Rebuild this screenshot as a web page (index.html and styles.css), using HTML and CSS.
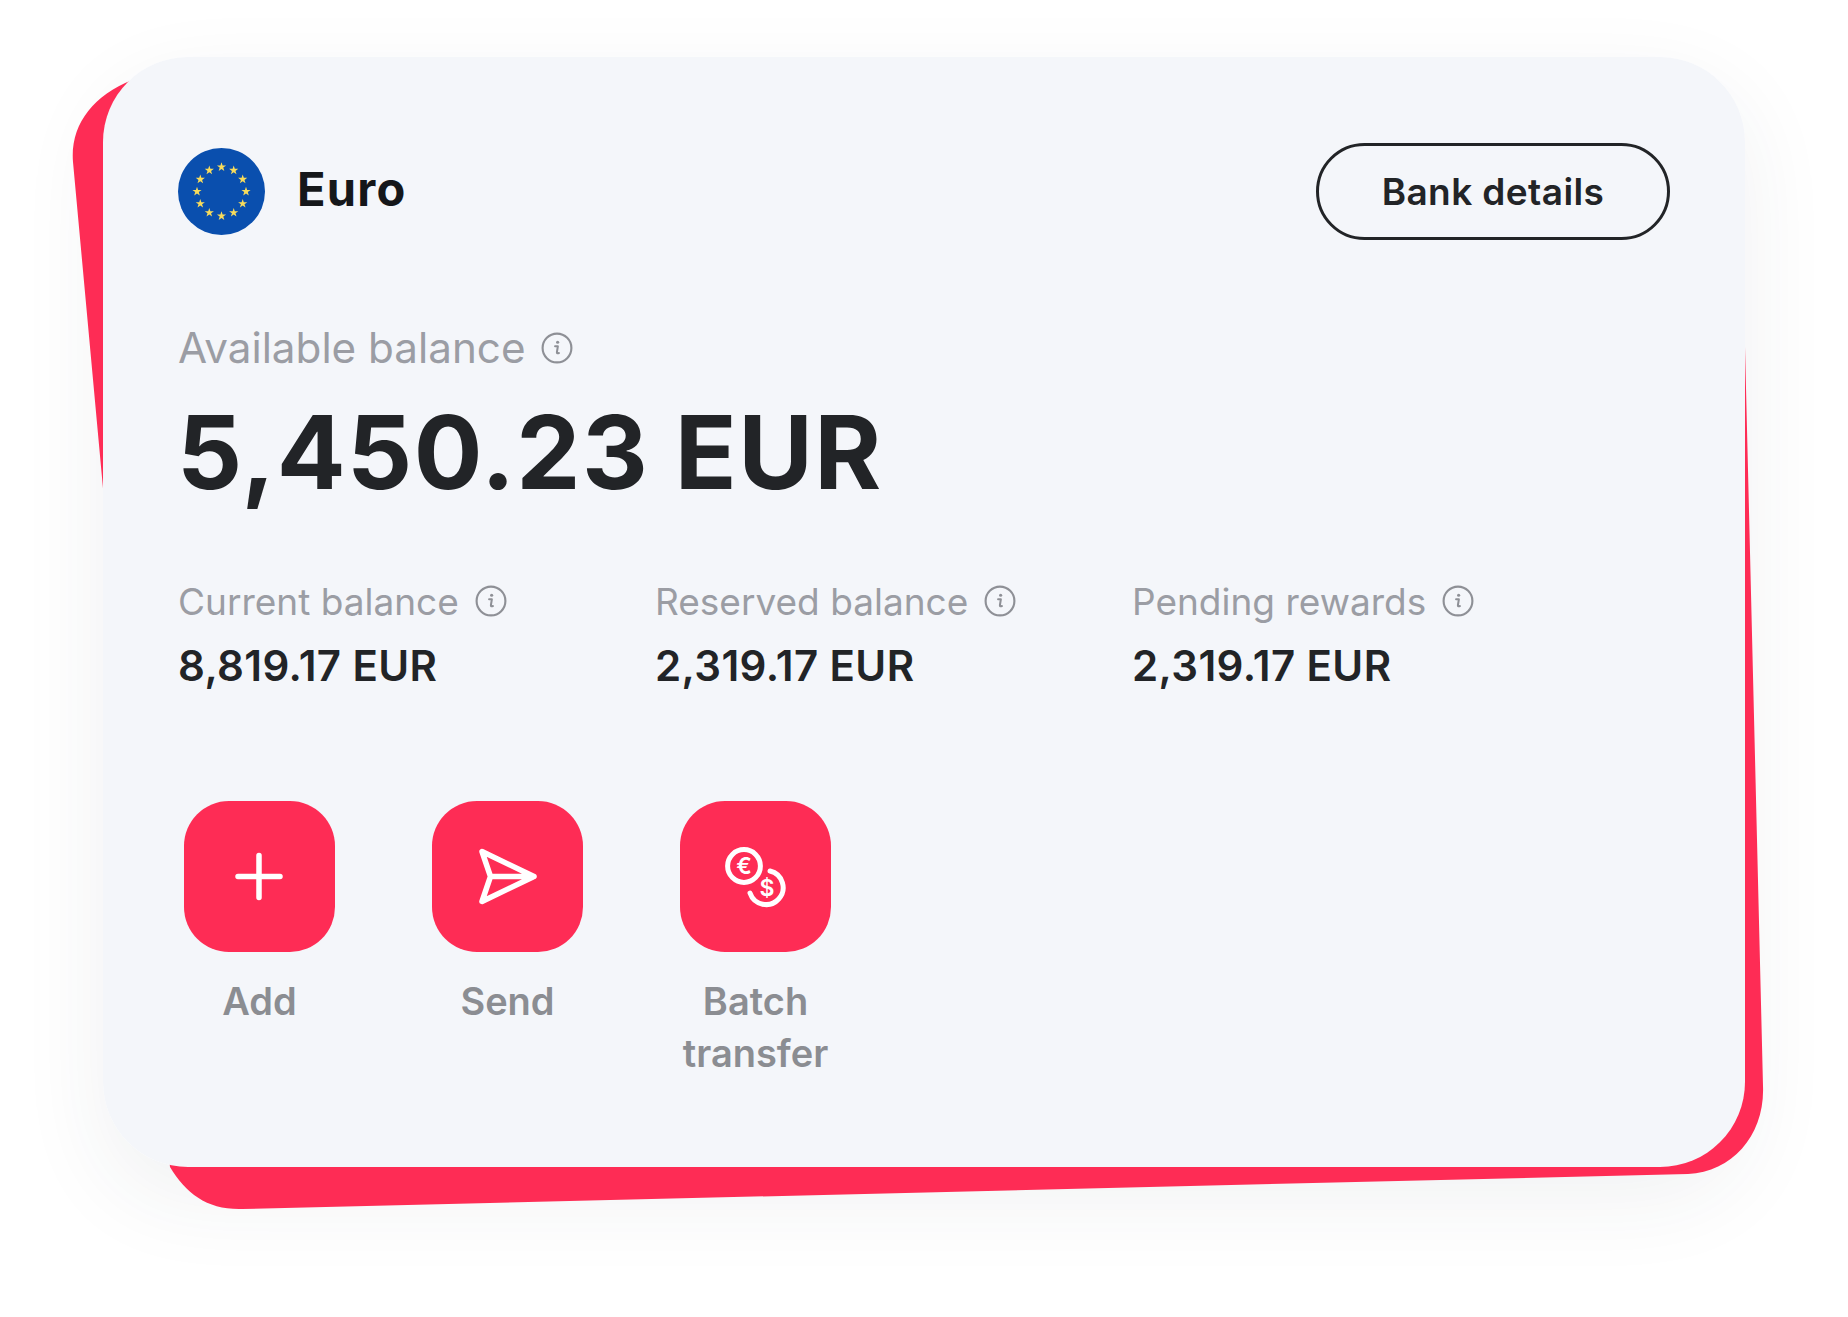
FILE: index.html
```html
<!DOCTYPE html>
<html lang="en">
<head>
<meta charset="utf-8">
<title>Euro balance</title>
<link rel="stylesheet" href="styles.css">
</head>
<body>
<svg class="defs" width="0" height="0" aria-hidden="true">
  <defs>
    <g id="info">
      <circle cx="15" cy="15" r="13.5" fill="none" stroke="currentColor" stroke-width="2"/>
      <circle cx="15.6" cy="9.6" r="1.5" fill="currentColor"/>
      <path d="M13.2 13.4h2.6l-.9 5.6c-.1.9.6 1.2 1.900.7" fill="none" stroke="currentColor" stroke-width="1.9" stroke-linecap="round" stroke-linejoin="round"/>
    </g>
    <polygon id="star" points="0,-4.800 1.100,-1.500 4.600,-1.500 1.800,.6 2.800,3.900 0,1.900 -2.800,3.900 -1.800,.6 -4.600,-1.500 -1.100,-1.500"/>
  </defs>
</svg>
<main class="stage">
  <svg class="backdrop" width="1848" height="1317" viewBox="0 0 1848 1317" aria-hidden="true">
    <path d="M132 80C92 96 70 126 73 162L105 510L170 1167C186 1194 208 1210 242 1209L1688 1174C1733 1172 1765 1134 1763 1086L1745 347L1700 100Z"/>
  </svg>
  <section class="card">
    <header class="card-head">
      <div class="currency">
        <svg class="flag" width="87" height="87" viewBox="-43.500 -43.500 87 87" aria-hidden="true">
          <circle r="43.500" fill="#0a4fae"/>
          <g fill="#f8dc5c">
            <use href="#star" x="0" y="-24.500"/><use href="#star" x="12.200" y="-21.200"/><use href="#star" x="21.200" y="-12.200"/>
            <use href="#star" x="24.500" y="0"/><use href="#star" x="21.200" y="12.200"/><use href="#star" x="12.200" y="21.200"/>
            <use href="#star" x="0" y="24.500"/><use href="#star" x="-12.200" y="21.200"/><use href="#star" x="-21.200" y="12.200"/>
            <use href="#star" x="-24.500" y="0"/><use href="#star" x="-21.200" y="-12.200"/><use href="#star" x="-12.200" y="-21.200"/>
          </g>
        </svg>
        <h1 class="currency-name">Euro</h1>
      </div>
      <button class="bank-btn" type="button">Bank details</button>
    </header>

    <div class="label label-main">Available balance <svg class="info info-main" width="32" height="32" viewBox="0 0 30 30"><use href="#info"/></svg></div>
    <div class="amount">5,450.23 EUR</div>

    <div class="stats">
      <div class="stat">
        <div class="label label-small">Current balance <svg class="info" width="32" height="32" viewBox="0 0 30 30"><use href="#info"/></svg></div>
        <div class="stat-value">8,819.17 EUR</div>
      </div>
      <div class="stat">
        <div class="label label-small">Reserved balance <svg class="info" width="32" height="32" viewBox="0 0 30 30"><use href="#info"/></svg></div>
        <div class="stat-value">2,319.17 EUR</div>
      </div>
      <div class="stat">
        <div class="label label-small">Pending rewards <svg class="info" width="32" height="32" viewBox="0 0 30 30"><use href="#info"/></svg></div>
        <div class="stat-value">2,319.17 EUR</div>
      </div>
    </div>

    <div class="actions">
      <div class="action">
        <div class="action-btn">
          <svg width="151" height="151" viewBox="0 0 151 151" fill="none" stroke="#fff" stroke-width="5.500" stroke-linecap="round"><path d="M75 54.500v42M54 75.500h42"/></svg>
        </div>
        <div class="action-label">Add</div>
      </div>
      <div class="action">
        <div class="action-btn">
          <svg width="151" height="151" viewBox="0 0 151 151" fill="none" stroke="#fff" stroke-width="5.500" stroke-linecap="round" stroke-linejoin="round"><path d="M102 75.500 50 50.500 58.500 75.500 50 100.500ZM58.500 75.500H102"/></svg>
        </div>
        <div class="action-label">Send</div>
      </div>
      <div class="action">
        <div class="action-btn">
          <svg width="151" height="151" viewBox="0 0 151 151" fill="none" stroke="#fff" stroke-width="5" stroke-linecap="round">
            <circle cx="64" cy="65" r="16.400"/>
            <path d="M90 70A17 17 0 1 1 70 92"/>
            <text class="coin" x="64" y="73" text-anchor="middle">€</text>
            <text class="coin" x="87" y="95" text-anchor="middle">$</text>
          </svg>
        </div>
        <div class="action-label">Batch transfer</div>
      </div>
    </div>
  </section>
</main>
</body>
</html>
```

FILE: styles.css
```css
* { box-sizing: border-box; }

html, body {
  margin: 0;
  padding: 0;
  background: #fff;
}

body {
  font-family: Inter, "Liberation Sans", sans-serif;
  width: 1848px;
  height: 1317px;
  overflow: hidden;
}

.defs { position: absolute; }

.stage {
  position: relative;
  width: 1642px;
  height: 1110px;
  margin: 57px 0 0 103px;
  border-radius: 85px;
  box-shadow: 0 30px 90px rgba(40, 50, 70, 0.07);
}

.backdrop {
  position: absolute;
  left: -103px;
  top: -57px;
}

.backdrop path { fill: #fe2c55; }

.card {
  position: relative;
  height: 100%;
  padding: 86px 75px 0 75px;
  background: #f4f6fa;
  border-radius: 85px;
}

.card-head {
  display: flex;
  align-items: center;
  justify-content: space-between;
  height: 97px;
}

.currency {
  display: flex;
  align-items: center;
  gap: 32px;
}

.flag { display: block; }

.currency-name {
  margin: -5px 0 0;
  font-size: 47px;
  font-weight: 650;
  letter-spacing: 1.2px;
  line-height: 56px;
  color: #15171a;
}

.bank-btn {
  width: 354px;
  height: 97px;
  padding: 0;
  background: transparent;
  border: 3px solid #222427;
  border-radius: 49px;
  font: 600 37px/1 Inter, "Liberation Sans", sans-serif;
  letter-spacing: 0.4px;
  color: #222427;
}

.label {
  display: flex;
  align-items: center;
  color: #9b9da4;
  font-weight: 400;
}

.label-main {
  margin-top: 83px;
  height: 48px;
  font-size: 42.2px;
  gap: 15px;
}

.info-main { margin-top: 2px; }

.label-small {
  height: 42px;
  font-size: 37px;
  gap: 16px;
}

.info { display: block; color: #8e9096; }

.amount {
  margin: 21px 0 0 -1px;
  font-size: 102px;
  font-weight: 700;
  letter-spacing: 1.400px;
  line-height: 120px;
  color: #222427;
}

.stats {
  display: grid;
  grid-template-columns: 477px 477px 477px;
  margin-top: 68px;
}

.stat-value {
  margin-top: 20px;
  font-size: 42px;
  font-weight: 600;
  letter-spacing: 0.4px;
  line-height: 48px;
  color: #222427;
}

.actions {
  display: flex;
  gap: 97px;
  margin: 111px 0 0 6px;
}

.action { width: 151px; }

.action-btn {
  width: 151px;
  height: 151px;
  background: #fe2c55;
  border-radius: 45px;
}

.action-btn svg { display: block; }

.coin {
  fill: #fff;
  stroke: none;
  font: 600 23px Inter, "Liberation Sans", sans-serif;
}

.action-label {
  margin-top: 23px;
  font-size: 38px;
  font-weight: 600;
  line-height: 52px;
  text-align: center;
  color: #8b8d92;
}
```
